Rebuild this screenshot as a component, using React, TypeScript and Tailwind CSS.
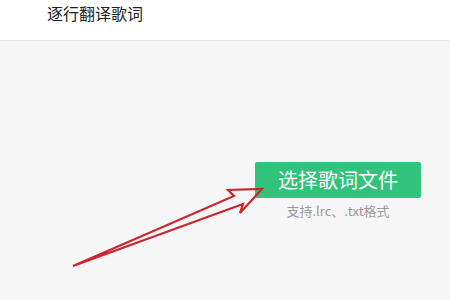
import React from "react";

const RedArrow: React.FC = () => (
  <svg
    className="absolute left-0 top-0 pointer-events-none"
    width="450"
    height="300"
    viewBox="0 0 450 300"
  >
    <polygon
      points="73,266 234,196 228,190 262,189 240,213 243,204"
      fill="none"
      stroke="#d0242c"
      strokeWidth="2.2"
      strokeLinejoin="miter"
    />
  </svg>
);

export default function App() {
  return (
    <div
      className="relative w-[450px] h-[300px] overflow-hidden bg-[#f7f7f7]"
      style={{ fontFamily: '"Noto Sans CJK SC", "Noto Sans", sans-serif' }}
    >
      <div className="h-[41px] bg-white border-b border-[#e5e5e5] pl-[47px] pt-[1px]">
        <span className="text-[16px] leading-[22px] text-[#222]">逐行翻译歌词</span>
      </div>
      <div className="flex flex-col items-center w-[166px] ml-[255px] mt-[121px]">
        <button className="w-[166px] h-[36px] rounded-[2px] bg-[#31c27c] text-white text-[20px] leading-none">
          选择歌词文件
        </button>
        <div className="mt-[5px] text-[13px] leading-[16px] text-[#999]">支持.lrc、.txt格式</div>
      </div>
      <RedArrow />
    </div>
  );
}
